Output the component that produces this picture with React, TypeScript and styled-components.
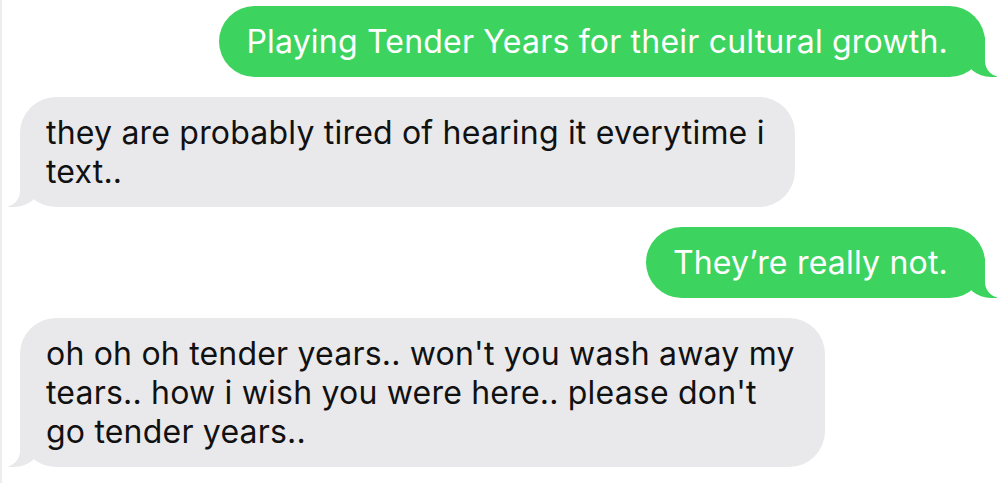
import React from 'react'
import styled, { createGlobalStyle, css } from 'styled-components'

const GlobalStyle = createGlobalStyle`
  html, body {
    margin: 0;
    padding: 0;
    background: #fff;
  }
  body {
    font-family: Inter, "Liberation Sans", sans-serif;
    -webkit-font-smoothing: antialiased;
  }
`

const GREEN = '#3dd35f'
const GRAY = '#e9e9eb'

const Thread = styled.main`
  width: 1000px;
  height: 483px;
  box-sizing: border-box;
  padding: 6px 15px 0 18px;
  border-left: 2px solid #ededed;
  display: flex;
  flex-direction: column;
  gap: 20px;
  overflow: hidden;
`

const Bubble = styled.div<{ $sent?: boolean }>`
  position: relative;
  padding: 16px 30px 16px 26px;
  border-radius: 36px;
  font-size: 32px;
  line-height: 39px;
  letter-spacing: 0.2px;
  white-space: nowrap;
  align-self: flex-start;
  background: ${GRAY};
  color: #111;

  &::before,
  &::after {
    content: '';
    position: absolute;
    bottom: 0;
    height: 40px;
  }

  ${({ $sent }) =>
    $sent
      ? css`
          align-self: flex-end;
          background: ${GREEN};
          color: #fff;
          padding: 16px 37px 16px 27px;

          &::before {
            right: -12px;
            width: 32px;
            background: ${GREEN};
            border-bottom-left-radius: 26px 22px;
          }
          &::after {
            right: -42px;
            width: 42px;
            background: #fff;
            border-bottom-left-radius: 16px;
          }
        `
      : css`
          &::before {
            left: -12px;
            width: 32px;
            background: ${GRAY};
            border-bottom-right-radius: 26px 22px;
          }
          &::after {
            left: -42px;
            width: 42px;
            background: #fff;
            border-bottom-right-radius: 16px;
          }
        `}
`

type Message = { sent: boolean; lines: string[] }

const messages: Message[] = [
  { sent: true, lines: ['Playing Tender Years for their cultural growth.'] },
  { sent: false, lines: ['they are probably tired of hearing it everytime i', 'text..'] },
  { sent: true, lines: ['They\u2019re really not.'] },
  {
    sent: false,
    lines: [
      "oh oh oh tender years.. won't you wash away my",
      "tears.. how i wish you were here.. please don't",
      'go tender years..',
    ],
  },
]

function App() {
  return (
    <>
      <GlobalStyle />
      <Thread>
        {messages.map((m, i) => (
          <Bubble key={i} $sent={m.sent}>
            {m.lines.map((l, j) => (
              <React.Fragment key={j}>
                {j > 0 && <br />}
                {l}
              </React.Fragment>
            ))}
          </Bubble>
        ))}
      </Thread>
    </>
  )
}

export default App
